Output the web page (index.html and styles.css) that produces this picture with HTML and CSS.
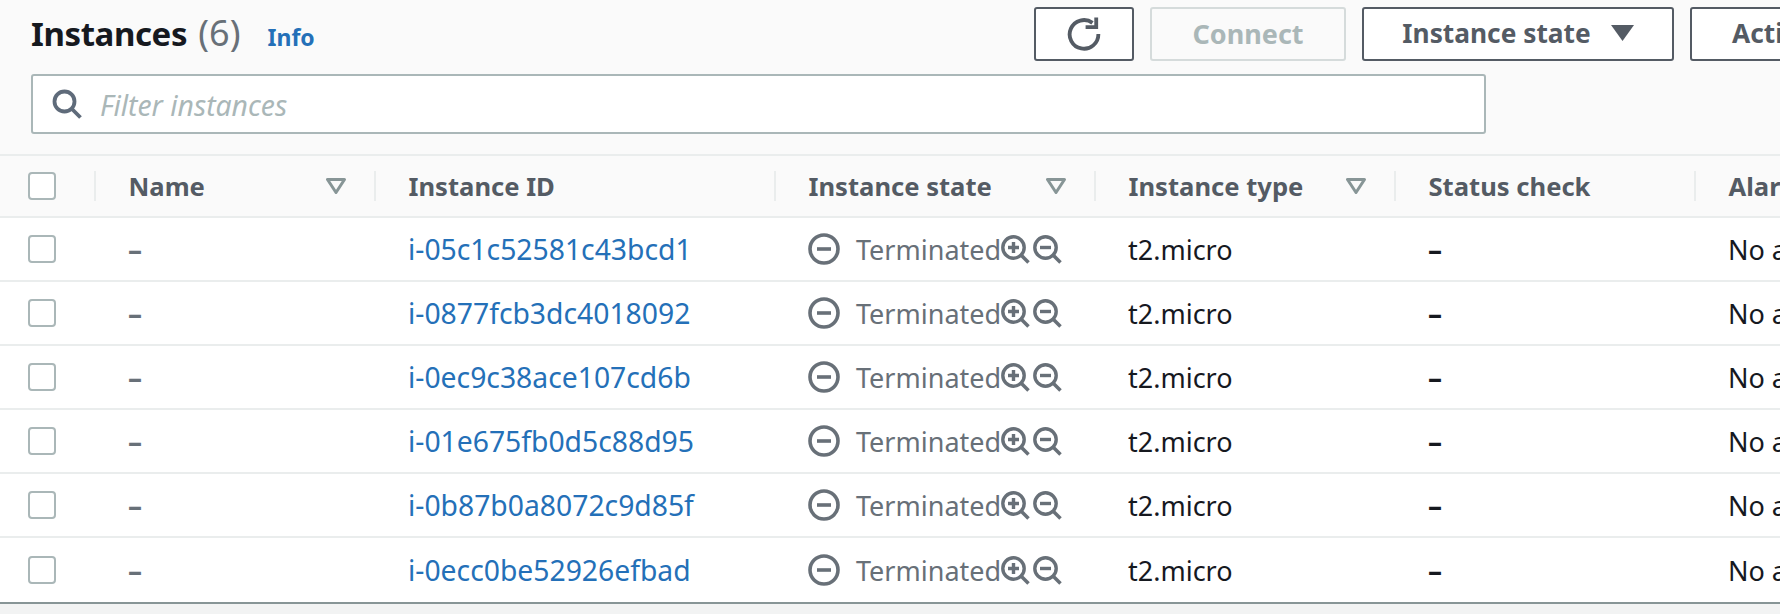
FILE: index.html
```html
<!DOCTYPE html>
<html lang="en">
  <head>
    <meta charset="UTF-8" />
    <meta name="viewport" content="width=device-width, initial-scale=1.0" />
    <title>Instances</title>
    <link rel="stylesheet" href="styles.css">
  </head>
  <body>
    <svg class="icon-defs" aria-hidden="true">
      <symbol id="sort" viewBox="0 0 20 16">
        <path d="M1.5 1.5h17L10 14.5z" fill="none" stroke="currentColor" stroke-width="3" stroke-linejoin="round" />
      </symbol>
      <symbol id="stopped" viewBox="0 0 32 32">
        <circle cx="16" cy="16" r="14" fill="none" stroke="currentColor" stroke-width="3.6" />
        <path d="M9 16h14" fill="none" stroke="currentColor" stroke-width="3.6" />
      </symbol>
      <symbol id="zoom-in" viewBox="0 0 29 29">
        <circle cx="12.5" cy="12.5" r="10.7" fill="none" stroke="currentColor" stroke-width="3.4" />
        <path d="M20 20l7.5 7.5" fill="none" stroke="currentColor" stroke-width="3.6" />
        <path d="M7 12.5h11M12.5 7v11" fill="none" stroke="currentColor" stroke-width="3.4" />
      </symbol>
      <symbol id="zoom-out" viewBox="0 0 29 29">
        <circle cx="12.5" cy="12.5" r="10.7" fill="none" stroke="currentColor" stroke-width="3.4" />
        <path d="M20 20l7.5 7.5" fill="none" stroke="currentColor" stroke-width="3.6" />
        <path d="M7 12.5h11" fill="none" stroke="currentColor" stroke-width="3.4" />
      </symbol>
    </svg>

    <section class="panel">
      <header class="panel-header">
        <div class="title-row">
          <h1 class="title">Instances <span class="count">(6)</span></h1>
          <a class="info-link" href="#">Info</a>
          <div class="actions">
            <button class="btn btn-refresh" aria-label="Refresh">
              <svg class="refresh-icon" viewBox="0 0 32 32">
                <path d="M24 5.5A13.5 13.5 0 1 0 29.5 16" fill="none" stroke="currentColor" stroke-width="3.6" />
                <path d="M17.5 9.5H27.5V0.5" fill="none" stroke="currentColor" stroke-width="3.6" />
              </svg>
            </button>
            <button class="btn btn-connect" disabled>Connect</button>
            <button class="btn btn-state">
              Instance state
              <svg class="btn-caret" viewBox="0 0 23 16"><path d="M0 0h23L11.5 16z" fill="currentColor" /></svg>
            </button>
            <button class="btn btn-more">Actions</button>
          </div>
        </div>
        <div class="filter">
          <svg class="search-icon" viewBox="0 0 30 30">
            <circle cx="12.5" cy="12.5" r="10" fill="none" stroke="currentColor" stroke-width="3.8" />
            <path d="M19.5 19.5L28.5 28.5" fill="none" stroke="currentColor" stroke-width="3.8" />
          </svg>
          <input class="filter-input" type="text" placeholder="Filter instances" />
        </div>
      </header>

      <table class="instances">
        <colgroup>
          <col class="col-check" />
          <col class="col-name" />
          <col class="col-id" />
          <col class="col-state" />
          <col class="col-type" />
          <col class="col-status" />
          <col class="col-alarm" />
        </colgroup>
        <thead>
          <tr>
            <th><div class="head-cell head-check"><span class="checkbox"></span></div></th>
            <th><div class="head-cell">Name <svg class="sort-icon"><use href="#sort" /></svg></div></th>
            <th><div class="head-cell">Instance ID</div></th>
            <th><div class="head-cell">Instance state <svg class="sort-icon"><use href="#sort" /></svg></div></th>
            <th><div class="head-cell">Instance type <svg class="sort-icon"><use href="#sort" /></svg></div></th>
            <th><div class="head-cell">Status check</div></th>
            <th><div class="head-cell">Alarm status</div></th>
          </tr>
        </thead>
        <tbody>
          <tr>
            <td class="cell-check"><span class="checkbox"></span></td>
            <td class="cell-empty">–</td>
            <td><a class="id-link" href="#">i-05c1c52581c43bcd1</a></td>
            <td><div class="state"><svg class="state-icon"><use href="#stopped" /></svg><span class="state-label">Terminated</span><svg class="zoom-icon"><use href="#zoom-in" /></svg><svg class="zoom-icon"><use href="#zoom-out" /></svg></div></td>
            <td>t2.micro</td>
            <td class="cell-dash">–</td>
            <td>No alarms</td>
          </tr>
          <tr>
            <td class="cell-check"><span class="checkbox"></span></td>
            <td class="cell-empty">–</td>
            <td><a class="id-link" href="#">i-0877fcb3dc4018092</a></td>
            <td><div class="state"><svg class="state-icon"><use href="#stopped" /></svg><span class="state-label">Terminated</span><svg class="zoom-icon"><use href="#zoom-in" /></svg><svg class="zoom-icon"><use href="#zoom-out" /></svg></div></td>
            <td>t2.micro</td>
            <td class="cell-dash">–</td>
            <td>No alarms</td>
          </tr>
          <tr>
            <td class="cell-check"><span class="checkbox"></span></td>
            <td class="cell-empty">–</td>
            <td><a class="id-link" href="#">i-0ec9c38ace107cd6b</a></td>
            <td><div class="state"><svg class="state-icon"><use href="#stopped" /></svg><span class="state-label">Terminated</span><svg class="zoom-icon"><use href="#zoom-in" /></svg><svg class="zoom-icon"><use href="#zoom-out" /></svg></div></td>
            <td>t2.micro</td>
            <td class="cell-dash">–</td>
            <td>No alarms</td>
          </tr>
          <tr>
            <td class="cell-check"><span class="checkbox"></span></td>
            <td class="cell-empty">–</td>
            <td><a class="id-link" href="#">i-01e675fb0d5c88d95</a></td>
            <td><div class="state"><svg class="state-icon"><use href="#stopped" /></svg><span class="state-label">Terminated</span><svg class="zoom-icon"><use href="#zoom-in" /></svg><svg class="zoom-icon"><use href="#zoom-out" /></svg></div></td>
            <td>t2.micro</td>
            <td class="cell-dash">–</td>
            <td>No alarms</td>
          </tr>
          <tr>
            <td class="cell-check"><span class="checkbox"></span></td>
            <td class="cell-empty">–</td>
            <td><a class="id-link" href="#">i-0b87b0a8072c9d85f</a></td>
            <td><div class="state"><svg class="state-icon"><use href="#stopped" /></svg><span class="state-label">Terminated</span><svg class="zoom-icon"><use href="#zoom-in" /></svg><svg class="zoom-icon"><use href="#zoom-out" /></svg></div></td>
            <td>t2.micro</td>
            <td class="cell-dash">–</td>
            <td>No alarms</td>
          </tr>
          <tr>
            <td class="cell-check"><span class="checkbox"></span></td>
            <td class="cell-empty">–</td>
            <td><a class="id-link" href="#">i-0ecc0be52926efbad</a></td>
            <td><div class="state"><svg class="state-icon"><use href="#stopped" /></svg><span class="state-label">Terminated</span><svg class="zoom-icon"><use href="#zoom-in" /></svg><svg class="zoom-icon"><use href="#zoom-out" /></svg></div></td>
            <td>t2.micro</td>
            <td class="cell-dash">–</td>
            <td>No alarms</td>
          </tr>
        </tbody>
      </table>
    </section>
  </body>
</html>
```

FILE: styles.css
```css
* {
  box-sizing: border-box;
}
body {
  background-color: #f2f3f3;
  color: #16191f;
  font-family: "Noto Sans", sans-serif;
  font-size: 27px;
  height: 614px;
  margin: 0;
  overflow: hidden;
}
.icon-defs {
  display: none;
}
.panel {
  background-color: #fff;
  border-bottom: 2px solid #879596;
  width: 1780px;
}
.panel-header {
  background-color: #fafafa;
  height: 154px;
  overflow: hidden;
  padding: 7px 0 0 31px;
}
.title-row {
  align-items: center;
  display: flex;
  height: 54px;
}
.title {
  font-size: 33px;
  font-weight: 700;
  letter-spacing: -0.4px;
  margin: -4px 0 0;
  white-space: nowrap;
}
.count {
  color: #687078;
  font-size: 36px;
  font-weight: 400;
  letter-spacing: 0;
  margin-left: 3px;
}
.info-link {
  color: #2470b8;
  font-size: 23px;
  font-weight: 700;
  margin-left: 27px;
  margin-top: 6px;
  text-decoration: none;
}
.actions {
  display: flex;
  gap: 16px;
  margin-left: auto;
  width: 746px;
}
.btn {
  align-items: center;
  background-color: #fff;
  border: 2px solid #545b64;
  border-radius: 3px;
  color: #545b64;
  display: flex;
  flex: none;
  font-family: inherit;
  font-size: 26.3px;
  font-weight: 700;
  height: 54px;
  justify-content: center;
  padding: 0 0 2px;
}
.btn-refresh {
  padding: 0;
  width: 100px;
}
.refresh-icon {
  height: 34px;
  width: 34px;
}
.btn-connect {
  background-color: #fafafa;
  border-color: #d5dbdb;
  color: #aab7b8;
  font-size: 27px;
  width: 196px;
}
.btn-state {
  gap: 20px;
  width: 312px;
}
.btn-caret {
  height: 16px;
  width: 23px;
}
.btn-more {
  justify-content: flex-start;
  padding-left: 40px;
  width: 196px;
}
.filter {
  align-items: center;
  background-color: #fff;
  border: 2px solid #aab7b8;
  border-radius: 3px;
  display: flex;
  height: 60px;
  margin-top: 13px;
  padding-left: 19px;
  width: 1455px;
}
.search-icon {
  color: #5f6b7a;
  flex: none;
  height: 30px;
  width: 30px;
}
.filter-input {
  background: none;
  border: none;
  flex: 1;
  font-family: inherit;
  font-size: 28.3px;
  font-style: italic;
  margin-left: 18px;
  margin-top: 2px;
  outline: none;
  padding: 0;
}
.filter-input::placeholder {
  color: #aab7b8;
  opacity: 1;
}
.instances {
  border-collapse: separate;
  border-spacing: 0;
  table-layout: fixed;
  width: 2196px;
}
.col-check {
  width: 96px;
}
.col-name {
  width: 280px;
}
.col-id {
  width: 400px;
}
.col-state {
  width: 320px;
}
.col-type {
  width: 300px;
}
.col-status {
  width: 300px;
}
.col-alarm {
  width: 500px;
}
.instances th {
  background-color: #fafafa;
  border-bottom: 2px solid #eaeded;
  border-top: 2px solid #eaeded;
  height: 64px;
  padding: 0;
}
.head-cell {
  align-items: center;
  border-right: 2px solid #eaeded;
  color: #545b64;
  display: flex;
  font-size: 25.6px;
  font-weight: 700;
  height: 30px;
  justify-content: space-between;
  padding: 0 28px 0 32.5px;
  white-space: nowrap;
}
.head-check {
  padding-left: 28px;
}
.sort-icon {
  color: #879596;
  height: 16px;
  width: 20px;
}
.instances td {
  border-bottom: 2px solid #eaeded;
  height: 64px;
  padding: 0 0 0 32px;
  white-space: nowrap;
}
.instances tbody tr:last-child td {
  border-bottom: none;
}
.instances td.cell-check {
  padding-left: 28px;
}
.instances td.cell-empty {
  color: #687078;
  font-size: 28px;
  font-weight: 700;
}
.instances td.cell-dash {
  font-size: 28px;
  font-weight: 700;
}
.checkbox {
  background-color: #fff;
  border: 2px solid #aab7b8;
  border-radius: 4px;
  display: block;
  height: 28px;
  width: 28px;
}
.id-link {
  color: #2470b8;
  font-size: 28.3px;
  text-decoration: none;
}
.state {
  align-items: center;
  color: #687078;
  display: flex;
}
.state-icon {
  height: 32px;
  margin-right: 16px;
  width: 32px;
}
.state-label {
  width: 145px;
}
.zoom-icon {
  height: 29px;
  margin-right: 3px;
  width: 29px;
}
```
